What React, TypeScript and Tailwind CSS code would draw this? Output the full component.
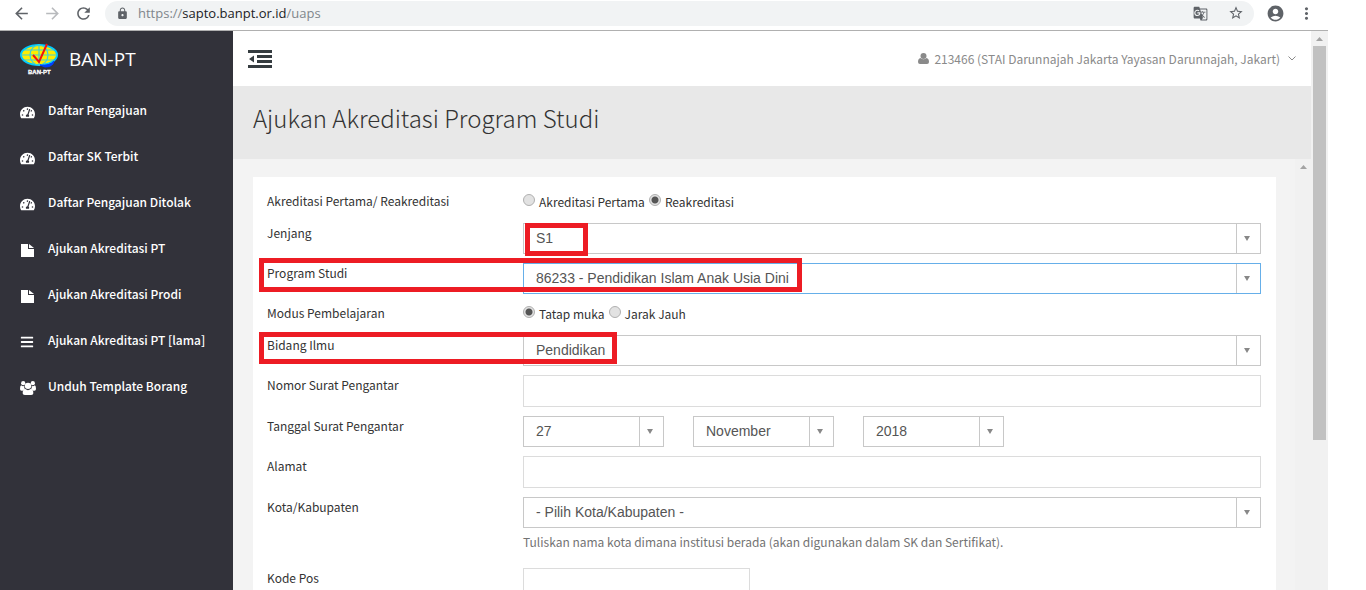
import type { ReactNode } from "react";
import clsx from "clsx";
import { FaBars, FaTachometerAlt } from "react-icons/fa";
import {
  MdAccountCircle,
  MdArrowBack,
  MdArrowForward,
  MdGTranslate,
  MdLock,
  MdMoreVert,
  MdRefresh,
  MdStarBorder,
} from "react-icons/md";

const UI_FONT = "font-['Source_Sans_Pro','Noto_Sans_CJK_SC',sans-serif]";

function UsersIcon() {
  return (
    <svg viewBox="0 0 30 26" className="h-[14px] w-4" fill="currentColor" aria-hidden="true">
      <circle cx="6" cy="4" r="4" />
      <circle cx="24" cy="4" r="4" />
      <circle cx="15" cy="9" r="6" />
      <path d="M2 8q4 3 6 1q-1 5 2 7q-3 0-5 2H3q-3 0-3-3q0-6 2-7z" />
      <path d="M28 8q-4 3-6 1q1 5-2 7q3 0 5 2h2q3 0 3-3q0-6-2-7z" />
      <path d="M10 15q5 4 10 0q5 0 5 8q0 3-4 3H9q-4 0-4-3q0-8 5-8z" />
    </svg>
  );
}

function FileIcon() {
  return (
    <svg viewBox="0 0 13 13" className="ml-px size-[13px]" fill="currentColor" aria-hidden="true">
      <path d="M0 0h7v5h6v8H0zM8 0l5 4H8z" />
    </svg>
  );
}

const menu: { label: string; icon: ReactNode }[] = [
  { label: "Daftar Pengajuan", icon: <FaTachometerAlt size={15} /> },
  { label: "Daftar SK Terbit", icon: <FaTachometerAlt size={15} /> },
  { label: "Daftar Pengajuan Ditolak", icon: <FaTachometerAlt size={15} /> },
  { label: "Ajukan Akreditasi PT", icon: <FileIcon /> },
  { label: "Ajukan Akreditasi Prodi", icon: <FileIcon /> },
  { label: "Ajukan Akreditasi PT [lama]", icon: <FaBars size={14} /> },
  { label: "Unduh Template Borang", icon: <UsersIcon /> },
];

function BrowserBar() {
  return (
    <div className="flex h-[31px] shrink-0 items-center border-b border-[#b0b0b0] bg-white pb-1 pl-3 text-[#5f6368]">
      <button type="button" aria-label="Back" className="w-[31px]"><MdArrowBack size={19} /></button>
      <button type="button" aria-label="Forward" className="w-[31px] text-[#b8babd]"><MdArrowForward size={19} /></button>
      <button type="button" aria-label="Reload" className="w-[31px]"><MdRefresh size={19} /></button>
      <div className="flex h-[25px] grow items-center rounded-full bg-[#f1f3f4] pr-[10px] pl-[11px]">
        <MdLock size={13} />
        <div className="ml-[9px] grow font-['Open_Sans',sans-serif] text-[13px] leading-5 text-[#80868b]">
          https://<span className="text-[#202124]">sapto.banpt.or.id</span>/uaps
        </div>
        <button type="button" aria-label="Translate" className="mr-5"><MdGTranslate size={15} /></button>
        <button type="button" aria-label="Bookmark"><MdStarBorder size={16} /></button>
      </div>
      <button type="button" aria-label="Profile" className="ml-3"><MdAccountCircle size={19} /></button>
      <button type="button" aria-label="More" className="mr-3 ml-3"><MdMoreVert size={19} /></button>
    </div>
  );
}

function Logo() {
  return (
    <svg viewBox="0 0 40 34" className="h-[34px] w-10" role="img" aria-label="BAN-PT logo">
      <ellipse cx="19" cy="13" rx="18" ry="10" fill="#ffee00" stroke="#00c8ff" strokeWidth="2" />
      <g fill="none" stroke="#3fd0d8" strokeWidth="1.200">
        <ellipse cx="19" cy="13" rx="9" ry="10" />
        <path d="M19 3v20M1 13h36M4 8h30M4 18h30" />
      </g>
      <path d="M20 23q10 1 14-4q-1 6-9 6z" fill="#0040ff" stroke="#0040ff" />
      <path d="M13 13l6 7l8-18" fill="none" stroke="#f01010" strokeWidth="2" />
      <text x="8" y="32" className="font-['Liberation_Sans',sans-serif] text-[6px] font-bold" fill="#fff" stroke="#fff" strokeWidth=".3">BAN-PT</text>
    </svg>
  );
}

function Sidebar() {
  return (
    <aside className="w-[233px] shrink-0 bg-[#32323a] text-white">
      <div className="flex h-14 items-center gap-[9px] pl-5">
        <Logo />
        <span className="font-['Open_Sans',sans-serif] text-[19px] leading-6">BAN-PT</span>
      </div>
      <nav className="flex flex-col">
        {menu.map((item) => (
          <a key={item.label} href="#" className="flex h-[46px] items-center pl-5">
            <span className="flex w-[28px] pt-1">{item.icon}</span>
            <span className="text-[12px] leading-5 font-medium">{item.label}</span>
          </a>
        ))}
      </nav>
    </aside>
  );
}

function TopBar() {
  return (
    <header className="flex h-[55px] shrink-0 items-center justify-between bg-white px-[15px] text-[#8a8a8a]">
      <button type="button" aria-label="Toggle menu" className="text-[#353c40]">
        <svg viewBox="0 0 24 18" className="h-[18px] w-6" fill="currentColor">
          <path d="M0 0h24v3H0zM9 5h15v3H9zM9 10h15v3H9zM0 15h24v3H0zM1 9l5-3.500v7z" />
        </svg>
      </button>
      <button type="button" className="flex items-center text-[12px] leading-5">
        <svg viewBox="0 0 11 11" className="mr-[5px] size-[11px]" fill="currentColor">
          <circle cx="5.500" cy="3" r="3" />
          <path d="M2.500 5q3 2.500 6 0q2.500.5 2.500 4q0 2-2 2H2q-2 0-2-2q0-3.500 2.500-4z" />
        </svg>
        213466 (STAI Darunnajah Jakarta Yayasan Darunnajah, Jakart)
        <svg viewBox="0 0 8 5" className="ml-2 h-[5px] w-2" fill="none" stroke="currentColor">
          <path d="M.5.5L4 4L7.500.5" />
        </svg>
      </button>
    </header>
  );
}

function ScrollArrow() {
  return (
    <svg viewBox="0 0 7 4" className="h-1 w-[7px]" fill="#a3a3a3" aria-hidden="true">
      <path d="M0 4L3.500 0L7 4z" />
    </svg>
  );
}

// red outline around the values that have to be checked
function Highlight({ className }: { className: string }) {
  return <span className={clsx("pointer-events-none absolute z-10 border-[5px] border-[#ed1c24]", className)} />;
}

type SelectProps = { id?: string; label?: string; value: string; active?: boolean };

function SelectBox({ id, label, value, active }: SelectProps) {
  return (
    <div className={clsx("relative h-[31px] border bg-white", active ? "border-[#66afe9]" : "border-[#c8c8c8]")}>
      <select
        id={id}
        aria-label={label}
        className="block h-full w-full appearance-none pr-7 pb-px pl-3 font-['Liberation_Sans',sans-serif] text-[14px] text-[#555] outline-none"
      >
        <option>{value}</option>
      </select>
      <span className="pointer-events-none absolute inset-y-0 right-0 flex w-6 items-center border-l border-[#c8c8c8] pl-[7px]">
        <svg viewBox="0 0 6 5" className="h-[5px] w-[6px]" fill="#888">
          <path d="M0 0h6L3 5z" />
        </svg>
      </span>
    </div>
  );
}

function TextBox({ id, className }: { id: string; className?: string }) {
  return <input id={id} type="text" className={clsx("block h-8 border border-[#dcdcdc] bg-white px-3 text-[14px]", className ?? "w-full")} />;
}

type RowProps = { label: string; htmlFor?: string; mark?: ReactNode; children: ReactNode };

function Row({ label, htmlFor, mark, children }: RowProps) {
  return (
    <div className="relative flex">
      <label htmlFor={htmlFor} className="w-[256px] shrink-0 leading-5">{label}</label>
      <div className="relative min-w-0 grow">{children}</div>
      {mark}
    </div>
  );
}

function RadioGroup({ name, options, checked }: { name: string; options: string[]; checked: string }) {
  return (
    <div role="radiogroup" aria-label={name} className="flex h-[23px] gap-1">
      {options.map((option) => (
        <label key={option} className="flex gap-1 leading-[22px]">
          <input
            type="radio"
            name={name}
            defaultChecked={option === checked}
            className="mt-[3px] size-3 appearance-none rounded-full border border-[#b0b0b0] bg-[#e2e2e2] checked:bg-[radial-gradient(circle,#555_3px,#e2e2e2_4px)]"
          />
          {option}
        </label>
      ))}
    </div>
  );
}

function AccreditationForm() {
  return (
    <form className="flex flex-col gap-[9px] bg-white pt-[14px] pr-[15px] pb-4 pl-[14px] text-[12px] text-[#333]">
      <Row label="Akreditasi Pertama/ Reakreditasi">
        <RadioGroup name="akreditasi" options={["Akreditasi Pertama", "Reakreditasi"]} checked="Reakreditasi" />
      </Row>
      <Row label="Jenjang" htmlFor="jenjang">
        <SelectBox id="jenjang" value="S1" />
        <Highlight className="top-0 left-[2px] h-[33px] w-[63px]" />
      </Row>
      <Row label="Program Studi" htmlFor="prodi" mark={<Highlight className="-top-[5px] -left-2 h-[34px] w-[543px]" />}>
        <SelectBox id="prodi" value="86233 - Pendidikan Islam Anak Usia Dini" active />
      </Row>
      <Row label="Modus Pembelajaran">
        <RadioGroup name="modus" options={["Tatap muka", "Jarak Jauh"]} checked="Tatap muka" />
      </Row>
      <Row label="Bidang Ilmu" htmlFor="bidang" mark={<Highlight className="-top-[3px] -left-2 h-8 w-[358px]" />}>
        <SelectBox id="bidang" value="Pendidikan" />
      </Row>
      <Row label="Nomor Surat Pengantar" htmlFor="nomor">
        <TextBox id="nomor" />
      </Row>
      <Row label="Tanggal Surat Pengantar" htmlFor="tanggal">
        <div className="grid grid-cols-[141px_141px_141px] gap-[29px]">
          <SelectBox id="tanggal" value="27" />
          <SelectBox label="Bulan" value="November" />
          <SelectBox label="Tahun" value="2018" />
        </div>
      </Row>
      <Row label="Alamat" htmlFor="alamat">
        <TextBox id="alamat" />
      </Row>
      <Row label="Kota/Kabupaten" htmlFor="kota">
        <SelectBox id="kota" value="- Pilih Kota/Kabupaten -" />
        <p className="h-[31px] pt-1 leading-5 text-[#737373]">
          Tuliskan nama kota dimana institusi berada (akan digunakan dalam SK dan Sertifikat).
        </p>
      </Row>
      <Row label="Kode Pos" htmlFor="kodepos">
        <TextBox id="kodepos" className="w-[227px]" />
      </Row>
    </form>
  );
}

export default function App() {
  return (
    <div className={clsx("flex h-screen flex-col overflow-hidden bg-white pr-[38px]", UI_FONT)}>
      <BrowserBar />
      <div className="flex min-h-0 grow">
        <Sidebar />
        <main className="flex min-w-0 grow flex-col">
          <TopBar />
          <div className="h-[73px] shrink-0 bg-[#e8e8e8] px-5 pt-4">
            <h1 className="text-[24px] leading-8 font-light text-[#333]">Ajukan Akreditasi Program Studi</h1>
          </div>
          <div className="flex min-h-0 grow bg-[#f3f3f3]">
            <div className="min-w-0 grow overflow-hidden pt-[18px] pr-[19px] pl-5">
              <AccreditationForm />
            </div>
            <div className="flex w-4 shrink-0 justify-center bg-[#f1f1f1] pt-[6px]">
              <ScrollArrow />
            </div>
          </div>
        </main>
        <div className="flex w-[17px] shrink-0 flex-col items-center bg-[#f1f1f1]">
          <div className="flex h-[15px] shrink-0 items-center">
            <ScrollArrow />
          </div>
          <div className="h-[394px] w-[13px] bg-[#c1c1c1]" />
        </div>
      </div>
    </div>
  );
}
